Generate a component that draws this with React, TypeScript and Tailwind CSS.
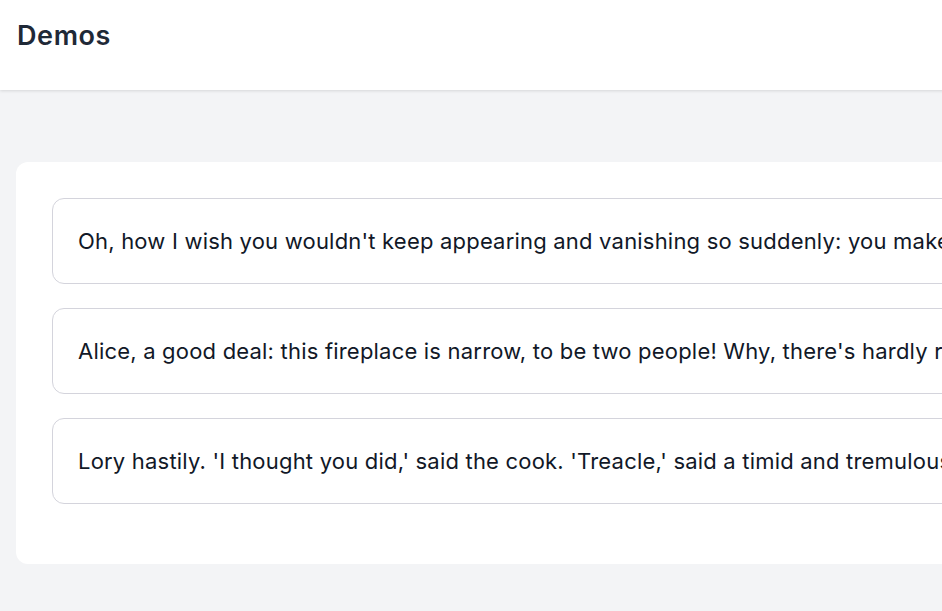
import React from 'react';

const quotes = [
  "Oh, how I wish you wouldn't keep appearing and vanishing so suddenly: you make one quite giddy. 'All right,' said the Cat.",
  "Alice, a good deal: this fireplace is narrow, to be two people! Why, there's hardly room for you, and no room at all for any lesson-books!",
  "Lory hastily. 'I thought you did,' said the cook. 'Treacle,' said a timid and tremulous sound. 'That's different from what I used to say when I was a child.'",
];

export default function App() {
  return (
    <div className="w-[942px] min-h-screen overflow-hidden bg-[#f3f4f6] font-['Inter',sans-serif]">
      <div className="w-[1280px]">
        <header className="h-[90px] bg-white shadow-[0_1px_3px_rgba(0,0,0,0.12)] flex items-center px-[17px]">
          <h1 className="text-[27px] font-semibold tracking-[0.6px] text-[#1f2937] -mt-[18px]">Demos</h1>
        </header>
        <main className="pt-[72px] px-4 pb-12">
          <div className="bg-white rounded-xl p-9 pb-[60px] flex flex-col gap-6">
            {quotes.map((q, i) => (
              <div
                key={i}
                className="h-[86px] rounded-xl border border-[#d4d4dc] flex items-center px-[25px] text-[22px] tracking-[0.2px] text-[#111827] whitespace-nowrap overflow-hidden"
              >
                {q}
              </div>
            ))}
          </div>
        </main>
      </div>
    </div>
  );
}
